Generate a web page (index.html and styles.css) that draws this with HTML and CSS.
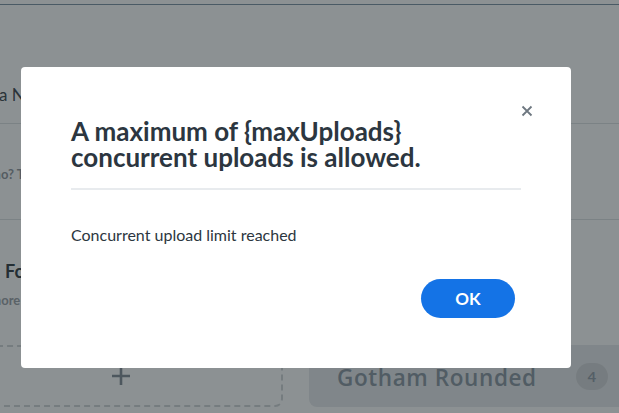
FILE: index.html
```html
<!DOCTYPE html>
<html lang="en">
<head>
<meta charset="utf-8">
<title>Upload limit</title>
<link rel="stylesheet" href="styles.css">
</head>
<body>
<div class="page">
  <div class="topbar"></div>
  <section class="sec sec-name">
    <div class="name-text">a Name</div>
  </section>
  <section class="sec sec-hint">
    <div class="hint-text">Who? Try</div>
  </section>
  <section class="sec-fonts">
    <div class="fonts-title">Fonts</div>
    <div class="fonts-sub">Learn more</div>
    <div class="fonts-row">
      <div class="add-box">
        <svg class="plus" width="22" height="22" viewBox="0 0 22 22"><path d="M11 2v18M2 11h18" stroke="currentColor" stroke-width="2.6" fill="none"/></svg>
      </div>
      <div class="font-card">
        <span class="font-name">Gotham Rounded</span>
        <span class="badge">4</span>
      </div>
    </div>
  </section>
</div>

<div class="overlay">
  <div class="modal" role="dialog">
    <button class="close" aria-label="Close">
      <svg width="12" height="12" viewBox="0 0 12 12"><path d="M1.5 1.5l9 9M10.5 1.5l-9 9" stroke="currentColor" stroke-width="1.8" fill="none"/></svg>
    </button>
    <h2 class="title">A maximum of {maxUploads} concurrent uploads is allowed.</h2>
    <div class="divider"></div>
    <p class="msg">Concurrent upload limit reached</p>
    <div class="actions">
      <button class="ok">OK</button>
    </div>
  </div>
</div>
</body>
</html>
```

FILE: styles.css
```css
html, body {
  margin: 0;
  padding: 0;
  width: 619px;
  height: 413px;
  overflow: hidden;
  background: #ffffff;
  font-family: "Lato", "Open Sans", sans-serif;
}

.page {
  display: flex;
  flex-direction: column;
}

.topbar {
  height: 4px;
  border-bottom: 1px solid #7a90a3;
}

.sec {
  display: flex;
  flex-direction: column;
  border-bottom: 1px solid #dde0e2;
}

.sec-name {
  height: 118px;
  justify-content: flex-end;
}

.name-text {
  font-size: 17px;
  color: #3a434b;
  padding-bottom: 18px;
  margin-left: -1px;
  line-height: 20px;
  white-space: nowrap;
}

.sec-hint {
  height: 95px;
  justify-content: center;
}

.hint-text {
  font-size: 13px;
  font-weight: 700;
  color: #8f959c;
  margin-left: -20px;
  margin-top: 4px;
  white-space: nowrap;
}

.sec-fonts {
  display: flex;
  flex-direction: column;
}

.fonts-title {
  margin-top: 40px;
  margin-left: 5px;
  font-size: 18px;
  font-weight: 700;
  color: #2e3840;
  line-height: 22px;
  white-space: nowrap;
}

.fonts-sub {
  margin-top: 10px;
  margin-left: -45px;
  font-size: 13px;
  font-weight: 700;
  color: #9aa0a6;
  line-height: 16px;
  white-space: nowrap;
}

.fonts-row {
  display: flex;
  gap: 26px;
  margin-top: 37px;
  margin-left: -41px;
}

.add-box {
  flex: none;
  width: 320px;
  height: 58px;
  border: 2px dashed #d0d4d7;
  border-radius: 8px;
  display: flex;
  align-items: center;
  justify-content: center;
  color: #818b94;
}

.font-card {
  width: 330px;
  height: 62px;
  flex: none;
  border-radius: 8px;
  background: #e7e9ec;
  display: flex;
  align-items: center;
  padding-left: 28px;
  box-sizing: border-box;
  gap: 39px;
}

.font-name {
  font-family: "Open Sans", sans-serif;
  font-size: 22.5px;
  font-weight: 600;
  letter-spacing: 0.6px;
  color: #8895a0;
  margin-top: 2px;
  white-space: nowrap;
}

.badge {
  width: 32px;
  height: 27px;
  border-radius: 14px;
  background: #d3d5d8;
  color: #909ba6;
  font-family: "Open Sans", sans-serif;
  font-weight: 600;
  font-size: 15px;
  display: flex;
  align-items: center;
  justify-content: center;
}

.overlay {
  position: fixed;
  inset: 0;
  background: rgba(25, 35, 40, 0.5);
  display: flex;
  align-items: flex-start;
}

.modal {
  position: relative;
  margin: 67px 0 0 21px;
  width: 550px;
  height: 301px;
  box-sizing: border-box;
  background: #ffffff;
  border-radius: 4px;
  padding: 51px 50px 50px;
  display: flex;
  flex-direction: column;
}

.close {
  position: absolute;
  top: 38px;
  right: 38px;
  width: 12px;
  height: 12px;
  padding: 0;
  border: 0;
  background: transparent;
  color: #6e7780;
  display: flex;
}

.title {
  margin: 0;
  width: 400px;
  font-size: 26px;
  line-height: 26px;
  font-weight: 700;
  color: #2c3640;
}

.divider {
  margin-top: 18px;
  height: 3px;
  background: #e8ebee;
}

.msg {
  margin: 35px 0 0;
  font-size: 16px;
  line-height: 20px;
  color: #2c3640;
}

.actions {
  margin-top: 34px;
  display: flex;
  justify-content: flex-end;
  padding-right: 6px;
}

.ok {
  width: 94px;
  height: 39px;
  border: 0;
  border-radius: 20px;
  background: #1473e6;
  color: #ffffff;
  font-family: "Lato", sans-serif;
  font-weight: 700;
  font-size: 17px;
  padding: 0;
}
```
